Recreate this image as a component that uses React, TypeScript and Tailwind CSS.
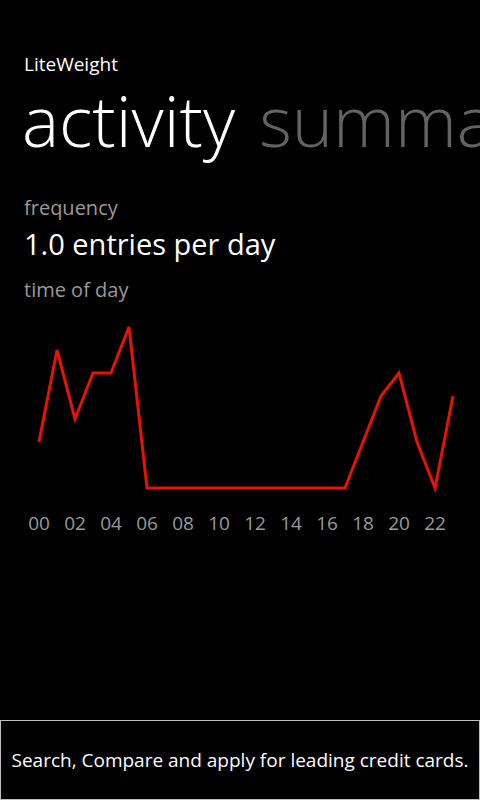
const values = [2, 6, 3, 5, 5, 7, 0, 0, 0, 0, 0, 0, 0, 0, 0, 0, 0, 0, 2, 4, 5, 2, 0, 4];
const labels = ["00", "02", "04", "06", "08", "10", "12", "14", "16", "18", "20", "22"];

function TimeChart() {
  // chart area starts at y=306 on the page; zero line sits at 488
  const points = values
    .map((v, i) => `${39 + i * 18},${184 - v * 23}`)
    .join(" ");

  return (
    <svg width="480" height="196" viewBox="0 0 480 196" className="block">
      <polyline
        points={points}
        fill="none"
        stroke="#e51400"
        strokeWidth="3"
        strokeLinejoin="miter"
      />
    </svg>
  );
}

export default function App() {
  return (
    <div
      className="w-[480px] h-[800px] bg-black text-white flex flex-col overflow-hidden"
      style={{ fontFamily: '"Open Sans", "Noto Sans", sans-serif' }}
    >
      {/* Title */}
      <div className="pt-[55px] pl-6 text-[19px] leading-[18px]">LiteWeight</div>

      {/* Pivot headers */}
      <div className="mt-[2px] pl-[22px] flex gap-[24px] whitespace-nowrap text-[70px] leading-[90px] font-light">
        <span>activity</span>
        <span className="text-[#636363]">summary</span>
      </div>

      {/* Content */}
      <div className="mt-[29px] pl-6 text-[20px] leading-[28px] text-[#999999]">frequency</div>
      <div className="mt-[4px] pl-6 text-[29px] leading-[36px]">1.0 entries per day</div>
      <div className="mt-[14px] pl-6 text-[20px] leading-[28px] text-[#999999]">time of day</div>

      <TimeChart />

      <div className="mt-[11px] pl-[21px] flex text-[19px] leading-[24px] text-[#999999]">
        {labels.map((l) => (
          <span key={l} className="w-[36px] text-center">
            {l}
          </span>
        ))}
      </div>

      <div className="flex-1" />

      {/* Ad banner */}
      <div className="h-[80px] border border-[#bfbfbf] flex items-center justify-center text-[19px]">
        Search, Compare and apply for leading credit cards.
      </div>
    </div>
  );
}
